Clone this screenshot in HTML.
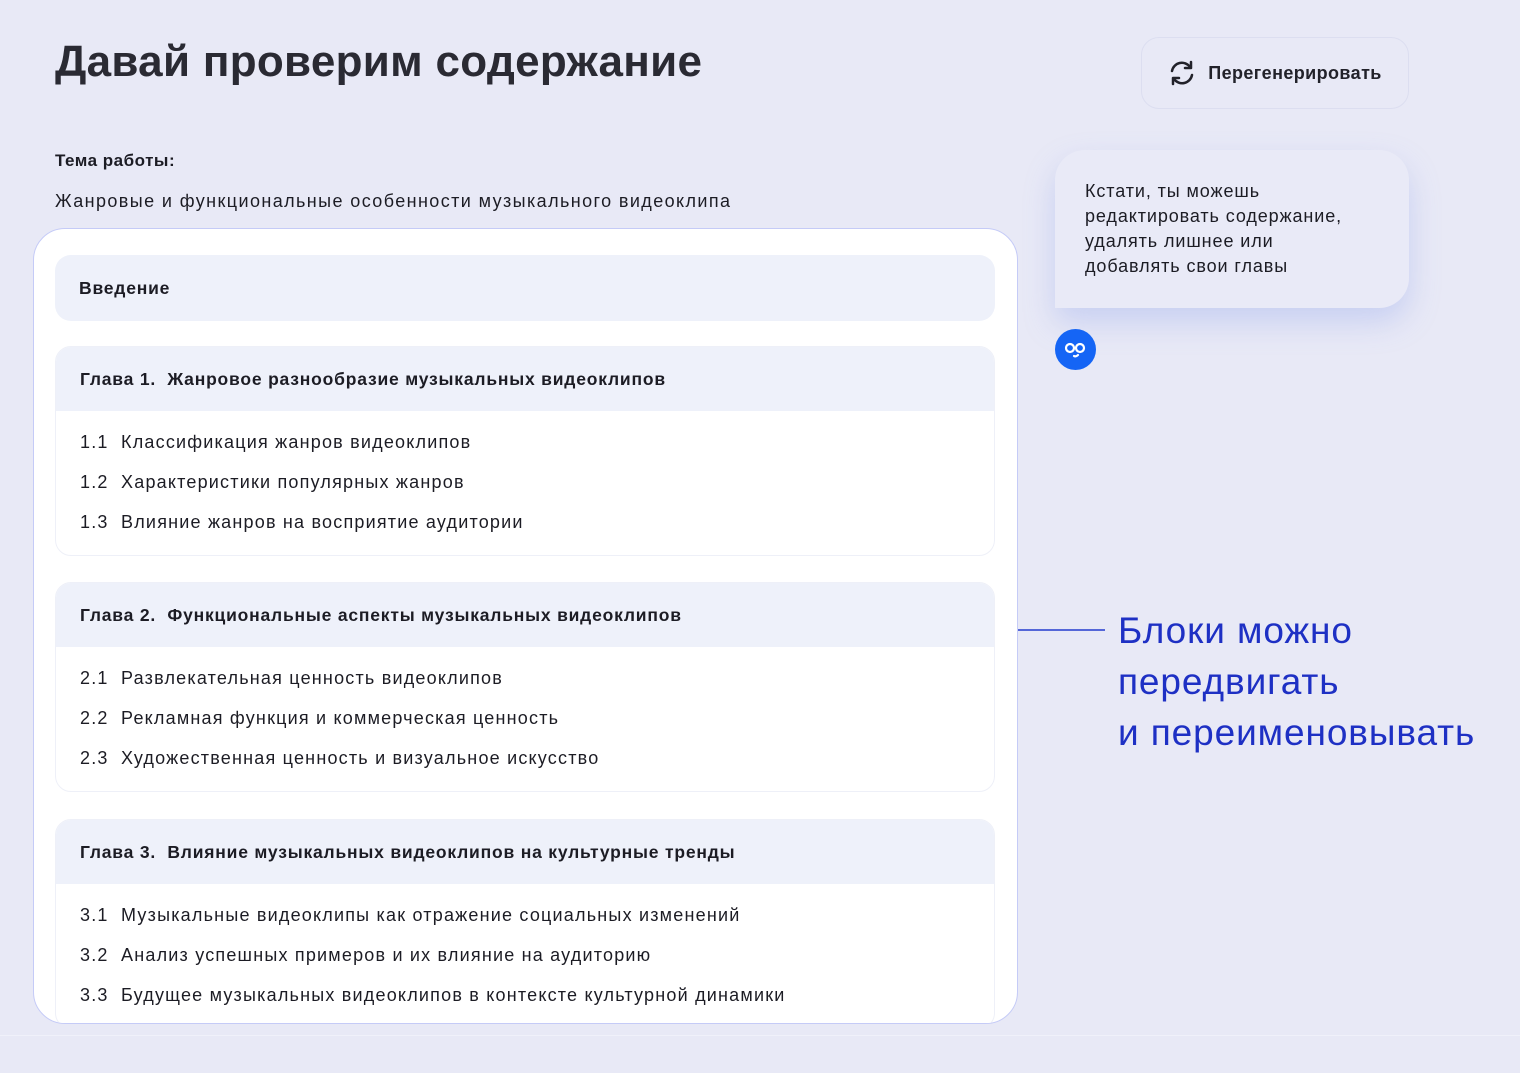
<!DOCTYPE html>
<html><head><meta charset="utf-8"><style>
*{box-sizing:border-box;margin:0;padding:0}
body{width:1520px;height:1073px;background:#e8e9f6;font-family:"Liberation Sans",sans-serif;color:#1c1c24;position:relative;overflow:hidden}
.abs{position:absolute}
h1{position:absolute;left:55px;top:37px;font-size:44px;font-weight:bold;color:#2a2a33;letter-spacing:0.3px;white-space:nowrap}
.btn{left:1141px;top:37px;width:268px;height:72px;border:1.5px solid #dcdef0;border-radius:18px;display:flex;align-items:center;justify-content:center;gap:12px;font-weight:bold;font-size:18px;color:#22222a;letter-spacing:0.4px}
.lab{left:55px;top:151px;font-weight:bold;font-size:17px;letter-spacing:0.5px}
.theme{left:55px;top:191px;font-size:18px;letter-spacing:1.4px}
.card{left:33px;top:228px;width:985px;height:796px;background:#fff;border:1.5px solid #c5cbf7;border-radius:32px;overflow:hidden}
.sec{position:absolute;left:21px;width:940px;border:1px solid #eef0f8;border-radius:16px;overflow:hidden;background:#fff}
.hd{background:#eef1fa;height:64px;padding-left:24px;display:flex;align-items:center;font-weight:bold;font-size:17.5px;white-space:nowrap;letter-spacing:0.8px}
.it{padding-left:24px;font-size:18px;height:40px;line-height:40px;letter-spacing:1.2px;white-space:nowrap}
.bd{padding-top:11px}
.tip{left:1055px;top:150px;width:354px;height:158px;background:#e9eaf7;border-radius:30px 30px 30px 0;box-shadow:0 14px 30px rgba(140,160,235,0.35);padding:29px 30px;font-size:18px;line-height:25px;letter-spacing:0.9px}
.av{left:1055px;top:329px;width:41px;height:41px;border-radius:50%;background:#1565f5}
.blue{left:1118px;top:605px;font-size:37px;line-height:51px;color:#1e30c4;letter-spacing:0.9px;white-space:nowrap}
.line{left:1018px;top:629px;width:87px;height:2px;background:#5466d8}
.foot{left:0;top:1035px;width:1520px;height:1px;background:#f0f1fa}
</style></head><body>
<h1>Давай проверим содержание</h1>
<div class="abs btn"><svg width="28" height="26" viewBox="0 0 28 26" fill="none" stroke="#22222a" stroke-width="2.5" stroke-linecap="round" stroke-linejoin="round"><path d="M4 11a10 10 0 0 1 18-4"/><path d="M23 2v6h-6"/><path d="M24 15a10 10 0 0 1-18 4"/><path d="M5 24v-6h6"/></svg>Перегенерировать</div>
<div class="abs lab">Тема работы:</div>
<div class="abs theme">Жанровые и функциональные особенности музыкального видеоклипа</div>
<div class="abs card">
 <div class="sec" style="top:26px;height:66px;border:none"><div class="hd" style="height:66px">Введение</div></div>
 <div class="sec" style="top:117px;height:210px"><div class="hd">Глава 1.&nbsp; Жанровое разнообразие музыкальных видеоклипов</div><div class="bd"><div class="it">1.1&nbsp; Классификация жанров видеоклипов</div><div class="it">1.2&nbsp; Характеристики популярных жанров</div><div class="it">1.3&nbsp; Влияние жанров на восприятие аудитории</div></div></div>
 <div class="sec" style="top:353px;height:210px"><div class="hd">Глава 2.&nbsp; Функциональные аспекты музыкальных видеоклипов</div><div class="bd"><div class="it">2.1&nbsp; Развлекательная ценность видеоклипов</div><div class="it">2.2&nbsp; Рекламная функция и коммерческая ценность</div><div class="it">2.3&nbsp; Художественная ценность и визуальное искусство</div></div></div>
 <div class="sec" style="top:590px;height:210px"><div class="hd">Глава 3.&nbsp; Влияние музыкальных видеоклипов на культурные тренды</div><div class="bd"><div class="it">3.1&nbsp; Музыкальные видеоклипы как отражение социальных изменений</div><div class="it">3.2&nbsp; Анализ успешных примеров и их влияние на аудиторию</div><div class="it">3.3&nbsp; Будущее музыкальных видеоклипов в контексте культурной динамики</div></div></div>
</div>
<div class="abs tip">Кстати, ты можешь<br>редактировать содержание,<br>удалять лишнее или<br>добавлять свои главы</div>
<div class="abs av"><svg width="41" height="41" viewBox="0 0 41 41" fill="none" stroke="#fff" stroke-width="2.2" stroke-linecap="round"><circle cx="15" cy="19" r="4"/><circle cx="25" cy="19" r="4"/><path d="M19 19h2"/><path d="M19 27q2 1 4-1"/></svg></div>
<div class="abs line"></div>
<div class="abs blue">Блоки можно<br>передвигать<br>и переименовывать</div>
<div class="abs foot"></div>
</body></html>
